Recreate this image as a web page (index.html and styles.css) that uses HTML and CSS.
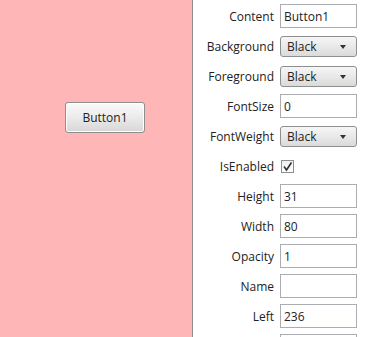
FILE: index.html
```html
<!DOCTYPE html>
<html lang="en">
<head>
  <meta charset="UTF-8">
  <title>Property editor</title>
  <link rel="stylesheet" href="styles.css">
</head>
<body>

<div class="app">
  <div class="canvas">
    <button type="button" class="demo_btn">Button1</button>
  </div>

  <div class="props">
    <label>Content</label>
    <input type="text" value="Button1">

    <label>Background</label>
    <div class="combo">Black<span class="arrow"></span></div>

    <label>Foreground</label>
    <div class="combo">Black<span class="arrow"></span></div>

    <label>FontSize</label>
    <input type="text" value="0">

    <label>FontWeight</label>
    <div class="combo">Black<span class="arrow"></span></div>

    <label>IsEnabled</label>
    <div class="check_cell">
      <span class="check">
        <svg width="11" height="11" viewBox="0 0 11 11"><path d="M2 5.5 L4.5 9 L9.5 1.5" fill="none" stroke="#333" stroke-width="1.6"/></svg>
      </span>
    </div>

    <label>Height</label>
    <input type="text" value="31">

    <label>Width</label>
    <input type="text" value="80">

    <label>Opacity</label>
    <input type="text" value="1">

    <label>Name</label>
    <input type="text" value="">

    <label>Left</label>
    <input type="text" value="236">

    <label></label>
    <input type="text" value="">
  </div>
</div>

</body>
</html>
```

FILE: styles.css
```css
html, body {
  margin: 0;
  height: 100%;
  overflow: hidden;
}
body {
  font-family: "Open Sans", "Noto Sans", sans-serif;
  font-size: 12px;
  color: #222;
}
.app {
  display: flex;
  height: 337px;
}
.canvas {
  width: 193px;
  background-color: #ffb6b6;
  border-right: 1px solid #8c8c8c;
  box-sizing: border-box;
  padding: 102px 0 0 65px;
}
.demo_btn {
  width: 80px;
  height: 31px;
  font-family: inherit;
  font-size: 12px;
  color: #222;
  border: 1px solid #8e8f8f;
  border-radius: 3px;
  background: linear-gradient(#fafafa, #ebebeb 50%, #d6d6d6);
  box-shadow: inset 0 0 0 1px #fff;
  padding: 0;
}
.props {
  flex: 1;
  background: #fff;
  display: grid;
  grid-template-columns: 81px 77px;
  grid-auto-rows: 30px;
  column-gap: 6px;
  align-items: center;
  padding-top: 1px;
}
.props label {
  text-align: right;
}
.props input[type="text"] {
  width: 77px;
  height: 24px;
  box-sizing: border-box;
  border: 1px solid #abadb3;
  padding: 0 3px;
  font-family: inherit;
  font-size: 12px;
  color: #222;
  outline: none;
}
.combo {
  position: relative;
  width: 77px;
  height: 21px;
  box-sizing: border-box;
  border: 1px solid #8e8f8f;
  border-radius: 3px;
  background: linear-gradient(#f6f6f6, #e9e9e9 50%, #dadada);
  padding-left: 6px;
  line-height: 19px;
}
.arrow {
  position: absolute;
  right: 10px;
  top: 8px;
  border-left: 3px solid transparent;
  border-right: 3px solid transparent;
  border-top: 4px solid #333;
}
.check_cell {
  display: flex;
  align-items: center;
}
.check {
  width: 13px;
  height: 13px;
  box-sizing: border-box;
  border: 1px solid #8e8f8f;
  background: linear-gradient(#f0f0f0, #fff);
  display: flex;
  align-items: center;
  justify-content: center;
  margin-left: 1px;
}
```
